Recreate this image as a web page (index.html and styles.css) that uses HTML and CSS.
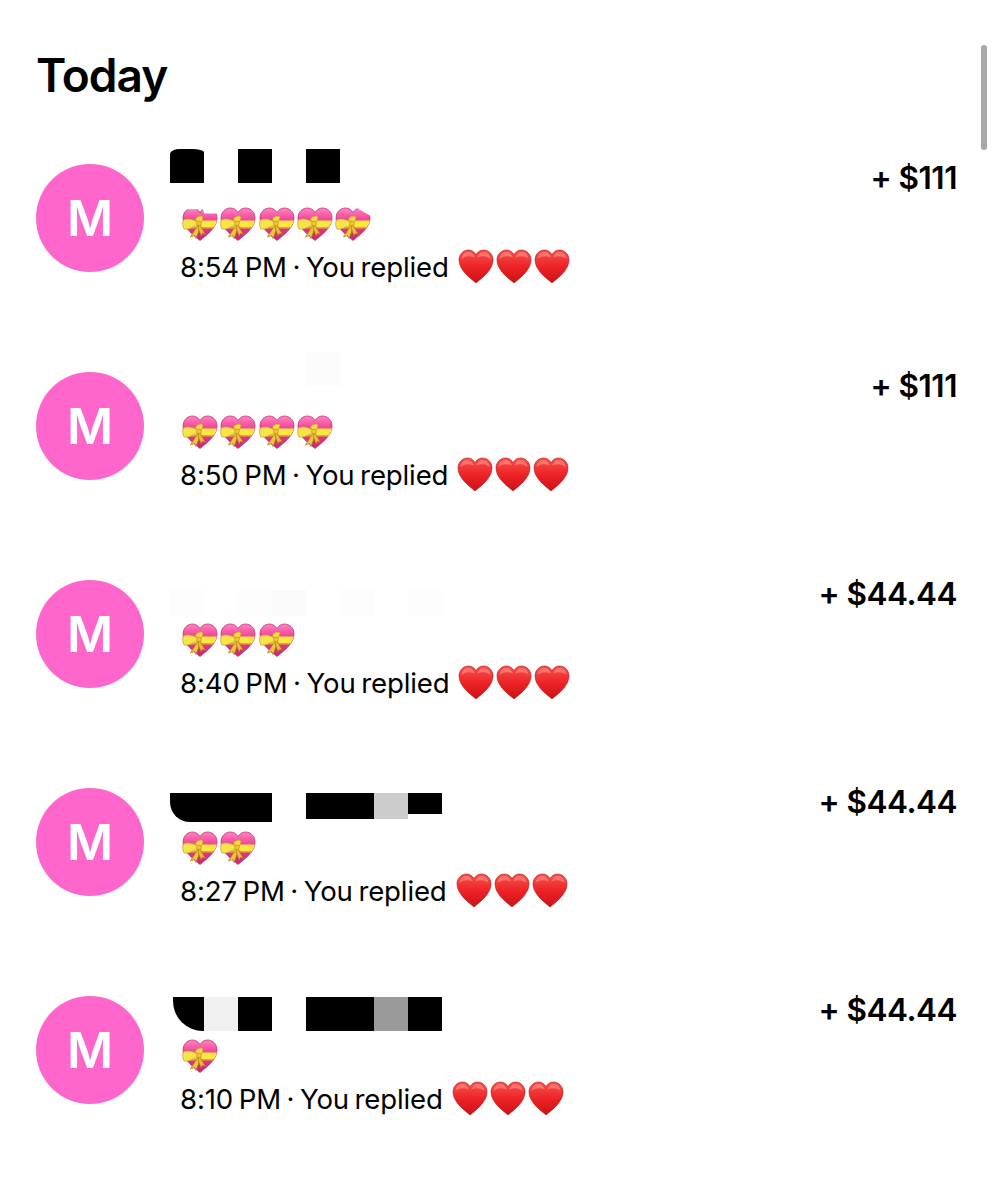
FILE: index.html
```html
<!DOCTYPE html>
<html lang="en">
<head>
    <meta charset="UTF-8">
    <meta name="viewport" content="width=device-width, initial-scale=1.0">
    <title>Today</title>
    <link rel="stylesheet" href="styles.css">
</head>
<body>
    <svg class="defs" width="0" height="0" aria-hidden="true">
        <defs>
            <linearGradient id="pinkTop" x1="0" y1="0" x2="0" y2="1">
                <stop offset="0" stop-color="#fb86c0"/>
                <stop offset="0.35" stop-color="#f2469a"/>
                <stop offset="1" stop-color="#c8246c"/>
            </linearGradient>
            <linearGradient id="redFill" x1="0" y1="0" x2="0" y2="1">
                <stop offset="0" stop-color="#f8504c"/>
                <stop offset="0.55" stop-color="#ec2024"/>
                <stop offset="1" stop-color="#c81418"/>
            </linearGradient>
            <clipPath id="heartClip">
                <path d="M18 33.5C12 28.5 1 21 1 11C1 5 5.5 1 10.5 1C13.8 1 16.4 2.8 18 5.6C19.6 2.8 22.2 1 25.5 1C30.5 1 35 5 35 11C35 21 24 28.5 18 33.5Z"/>
            </clipPath>
            <symbol id="giftHeart" viewBox="0 0 36 36">
                <path d="M18 33.5C12 28.5 1 21 1 11C1 5 5.5 1 10.5 1C13.8 1 16.4 2.8 18 5.6C19.6 2.8 22.2 1 25.5 1C30.5 1 35 5 35 11C35 21 24 28.5 18 33.5Z" fill="url(#pinkTop)" stroke="#c8307c" stroke-width="0.8"/>
                <g clip-path="url(#heartClip)">
                    <rect x="0" y="13.5" width="36" height="7" fill="#fbe83c"/>
                    <rect x="0" y="20.5" width="36" height="1" fill="#e0b030"/>
                </g>
                <path d="M16.5 17L8.5 30L12.5 28.5L14 31.5L18 21Z" fill="#f3c93a" stroke="#a8742c" stroke-width="0.7"/>
                <path d="M17.5 17L23.5 27.5L20.5 26.5L19 29L16 21Z" fill="#f0b83a" stroke="#a8642c" stroke-width="0.7"/>
                <path d="M15.5 15.5C12 12 5 11 1.5 13C0 15 0.5 20 2 22C6 23 12 20 15.5 17.5Z" fill="#f8e448" stroke="#c89a30" stroke-width="0.7"/>
                <path d="M19 15.5C20.5 12.5 21.5 10.5 20.5 9.5C18.5 8.2 15 9.5 13.5 12L15.5 16Z" fill="#f6d93e" stroke="#c89a30" stroke-width="0.7"/>
                <circle cx="17" cy="16.5" r="2.4" fill="#f2c632" stroke="#b8862c" stroke-width="0.6"/>
            </symbol>
            <symbol id="redHeart" viewBox="0 0 36 36">
                <path d="M18 34C12 29 1 21 1 11C1 5 5.5 1 10.5 1C13.8 1 16.4 2.8 18 5.6C19.6 2.8 22.2 1 25.5 1C30.5 1 35 5 35 11C35 21 24 29 18 34Z" fill="url(#redFill)" stroke="#b81418" stroke-width="0.6"/>
                <path d="M10.5 3C7 3 3.5 6 3.5 10C7 6.5 12 6.5 17 8.5C15.5 5 13.5 3 10.5 3ZM25.5 3C23 3 20.5 5 19.2 8.5C24 6.5 29 6.5 32.5 10C32.5 6 29 3 25.5 3Z" fill="#ff8a80" opacity="0.7"/>
            </symbol>
        </defs>
    </svg>

    <main class="page">
        <div class="scroll-thumb"></div>
        <h1 class="heading">Today</h1>

        <ul class="list">
            <li class="row">
                <div class="redact redact-one">
                    <span class="cell cell-black cell-top"></span><span class="cell"></span><span class="cell cell-black"></span><span class="cell"></span><span class="cell cell-black"></span>
                </div>
                <div class="avatar">M</div>
                <div class="body">
                    <div class="gifts">
                        <svg class="gift gift-cut-first"><use href="#giftHeart"/></svg>
                        <svg class="gift"><use href="#giftHeart"/></svg>
                        <svg class="gift"><use href="#giftHeart"/></svg>
                        <svg class="gift"><use href="#giftHeart"/></svg>
                        <svg class="gift gift-cut-last"><use href="#giftHeart"/></svg>
                    </div>
                    <p class="meta">8:54 PM · You replied
                        <span class="hearts">
                            <svg class="heart"><use href="#redHeart"/></svg>
                            <svg class="heart"><use href="#redHeart"/></svg>
                            <svg class="heart"><use href="#redHeart"/></svg>
                        </span>
                    </p>
                </div>
                <div class="amount">+ $111</div>
            </li>

            <li class="row">
                <div class="redact redact-two">
                    <span class="cell"></span><span class="cell"></span><span class="cell"></span><span class="cell"></span><span class="cell cell-faint"></span>
                </div>
                <div class="avatar">M</div>
                <div class="body">
                    <div class="gifts">
                        <svg class="gift"><use href="#giftHeart"/></svg>
                        <svg class="gift"><use href="#giftHeart"/></svg>
                        <svg class="gift"><use href="#giftHeart"/></svg>
                        <svg class="gift"><use href="#giftHeart"/></svg>
                    </div>
                    <p class="meta">8:50 PM · You replied
                        <span class="hearts">
                            <svg class="heart"><use href="#redHeart"/></svg>
                            <svg class="heart"><use href="#redHeart"/></svg>
                            <svg class="heart"><use href="#redHeart"/></svg>
                        </span>
                    </p>
                </div>
                <div class="amount">+ $111</div>
            </li>

            <li class="row">
                <div class="redact redact-three">
                    <span class="cell cell-fainter"></span><span class="cell"></span><span class="cell cell-fainter"></span><span class="cell cell-faint"></span><span class="cell"></span><span class="cell cell-fainter"></span><span class="cell"></span><span class="cell cell-fainter"></span>
                </div>
                <div class="avatar">M</div>
                <div class="body">
                    <div class="gifts">
                        <svg class="gift"><use href="#giftHeart"/></svg>
                        <svg class="gift"><use href="#giftHeart"/></svg>
                        <svg class="gift"><use href="#giftHeart"/></svg>
                    </div>
                    <p class="meta">8:40 PM · You replied
                        <span class="hearts">
                            <svg class="heart"><use href="#redHeart"/></svg>
                            <svg class="heart"><use href="#redHeart"/></svg>
                            <svg class="heart"><use href="#redHeart"/></svg>
                        </span>
                    </p>
                </div>
                <div class="amount">+ $44.44</div>
            </li>

            <li class="row">
                <div class="redact redact-four">
                    <span class="cell cell-black cell-corner"></span><span class="cell cell-black cell-tall"></span><span class="cell cell-black cell-tall"></span><span class="cell"></span><span class="cell cell-black cell-short"></span><span class="cell cell-black cell-short"></span><span class="cell cell-light cell-short"></span><span class="cell cell-black cell-shorter"></span>
                </div>
                <div class="avatar">M</div>
                <div class="body">
                    <div class="gifts">
                        <svg class="gift"><use href="#giftHeart"/></svg>
                        <svg class="gift"><use href="#giftHeart"/></svg>
                    </div>
                    <p class="meta">8:27 PM · You replied
                        <span class="hearts">
                            <svg class="heart"><use href="#redHeart"/></svg>
                            <svg class="heart"><use href="#redHeart"/></svg>
                            <svg class="heart"><use href="#redHeart"/></svg>
                        </span>
                    </p>
                </div>
                <div class="amount">+ $44.44</div>
            </li>

            <li class="row">
                <div class="redact redact-five">
                    <span class="cell cell-black cell-round"></span><span class="cell cell-pale"></span><span class="cell cell-black"></span><span class="cell"></span><span class="cell cell-black"></span><span class="cell cell-black"></span><span class="cell cell-grey"></span><span class="cell cell-black"></span>
                </div>
                <div class="avatar">M</div>
                <div class="body">
                    <div class="gifts">
                        <svg class="gift"><use href="#giftHeart"/></svg>
                    </div>
                    <p class="meta">8:10 PM · You replied
                        <span class="hearts">
                            <svg class="heart"><use href="#redHeart"/></svg>
                            <svg class="heart"><use href="#redHeart"/></svg>
                            <svg class="heart"><use href="#redHeart"/></svg>
                        </span>
                    </p>
                </div>
                <div class="amount">+ $44.44</div>
            </li>
        </ul>
    </main>
</body>
</html>
```

FILE: styles.css
```css
html, body { margin: 0; padding: 0; background: #fff; }
body { font-family: Inter, "Liberation Sans", sans-serif; color: #000; overflow: hidden; }
.defs { position: absolute; }
.page { position: relative; height: 1200px; padding: 0 37px 0 36px; box-sizing: border-box; }
.scroll-thumb { position: absolute; top: 45px; left: 981px; width: 6px; height: 105px; border-radius: 3px; background: #a8a8a8; }
.heading { margin: 0; padding-top: 46px; font-size: 46px; line-height: 58px; font-weight: 600; letter-spacing: -1px; }
.list { list-style: none; margin: 0; padding: 0; padding-top: 60px; }
.row { position: relative; display: flex; align-items: flex-start; height: 208px; }
.avatar { flex: none; width: 108px; height: 108px; border-radius: 50%; background: #ff66cc; color: #fff; font-size: 50px; font-weight: 600; line-height: 108px; text-align: center; }
.body { flex: 1; padding: 43px 0 0 38px; }
.gifts { display: flex; gap: 2.3px; height: 36px; }
.gift { width: 36px; height: 36px; }
.gift-cut-first { clip-path: polygon(0 6%, 58% 6%, 62% 18%, 100% 18%, 100% 100%, 0 100%); }
.gift-cut-last { clip-path: polygon(0 0, 55% 0, 100% 26%, 100% 100%, 0 100%); }
.meta { margin: 4px 0 0 -2px; font-size: 27.6px; line-height: 40px; letter-spacing: -0.15px; word-spacing: -2px; white-space: nowrap; display: flex; align-items: center; gap: 9px; }
.hearts { display: flex; gap: 2px; }
.heart { width: 36px; height: 36px; }
.amount { font-size: 31.5px; line-height: 28px; font-weight: 600; letter-spacing: -0.5px; white-space: nowrap; }

/* paint-over blocks on the names */
.redact { position: absolute; left: 134px; display: flex; }
.redact-one { top: -15px; }
.redact-two { top: -20px; }
.redact-three { top: 10px; }
.redact-four { top: 5px; }
.redact-five { top: 1px; }
.cell { width: 34px; height: 34px; }
.cell-black { background: #000; }
.cell-top { border-radius: 10px 12px 0 0 / 5px 3px 0 0; }
.cell-corner { height: 29px; border-bottom-left-radius: 20px; }
.cell-tall { height: 29px; }
.cell-short { height: 26px; }
.cell-shorter { height: 21px; }
.cell-round { border-bottom-left-radius: 30px; margin-left: 3px; width: 31px; }
.cell-pale { background: #f0f0f0; }
.cell-grey { background: #9a9a9a; }
.cell-light { background: #cccccc; }
.cell-faint { background: #fafafa; height: 26px; }
.cell-fainter { background: #fdfdfd; height: 26px; }
.redact-two .cell-faint { height: 34px; background: #fcfcfc; }
```
